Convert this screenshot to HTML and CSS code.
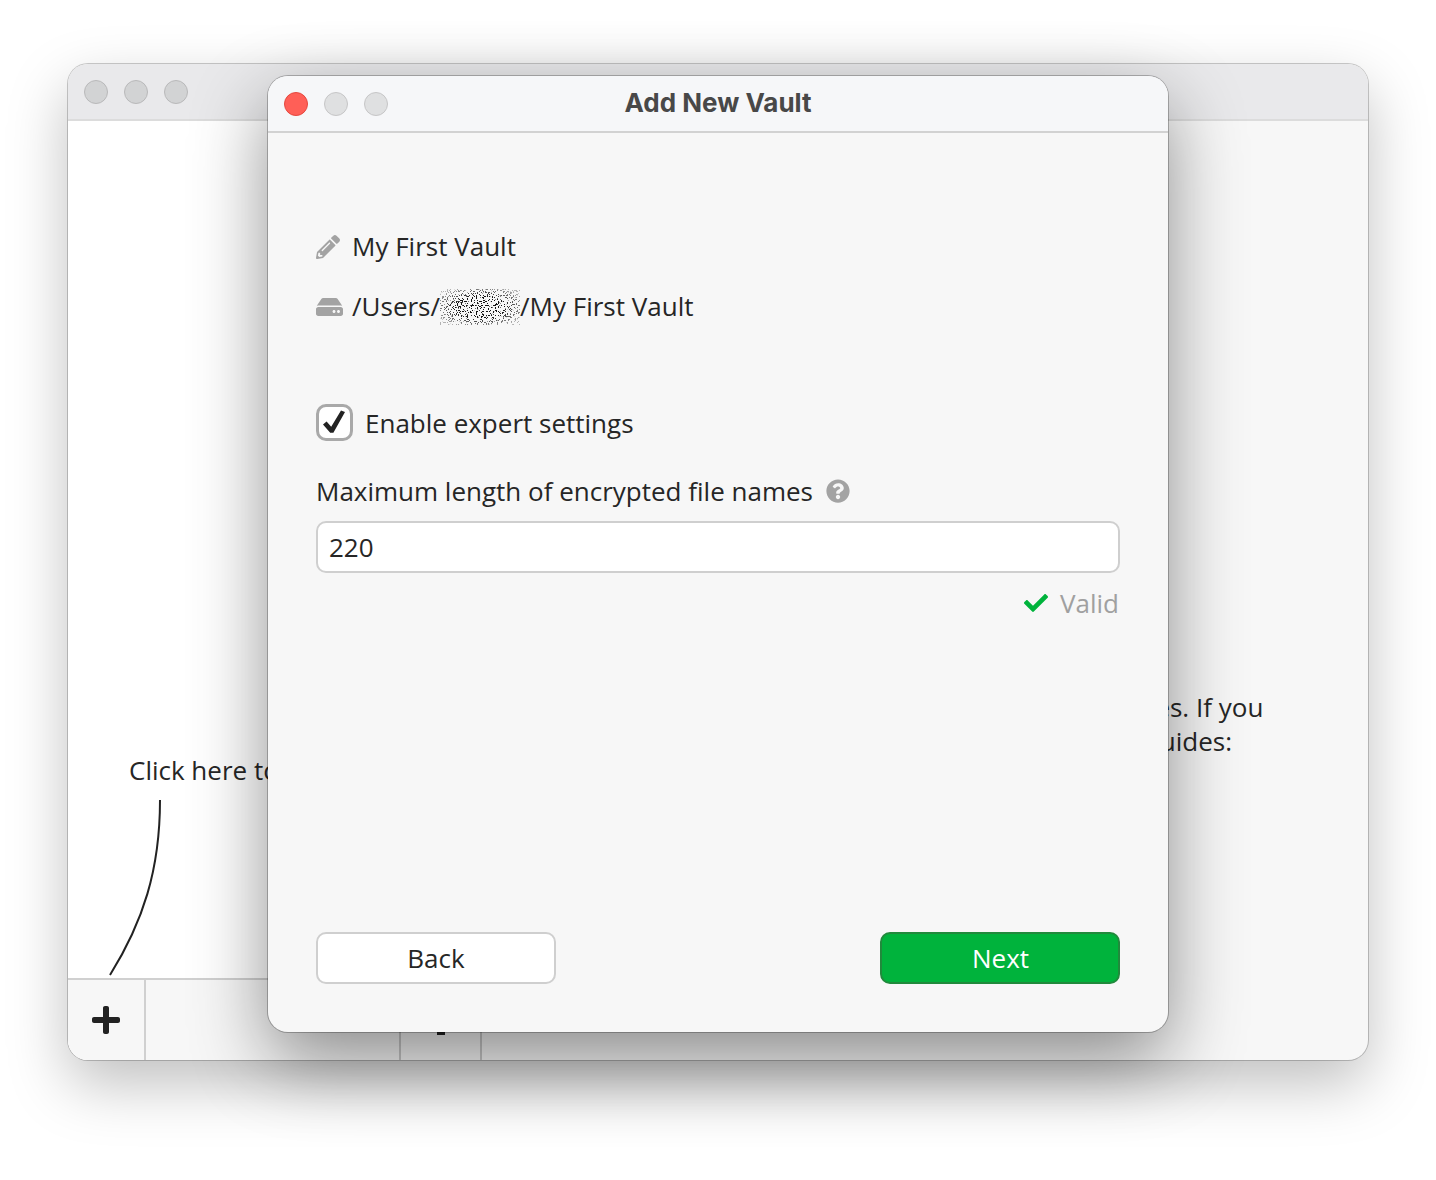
FILE: index.html
```html
<!DOCTYPE html>
<html lang="en">
<head>
<meta charset="utf-8">
<title>Add New Vault</title>
<link rel="stylesheet" href="styles.css">
</head>
<body>
<section class="window main-window">
  <header class="titlebar main-titlebar">
    <span class="light light-main"></span><span class="light light-main"></span><span class="light light-main"></span>
  </header>
  <div class="main-body">
    <aside class="sidebar">
      <div class="sidebar-hint">
        <p class="hint-text">Click here to add a vault</p>
        <svg class="hint-curve" width="60" height="178" viewBox="0 0 60 178"><path d="M51 0C51 70 34 122 1 175" fill="none" stroke="#222" stroke-width="2"/></svg>
      </div>
      <div class="sidebar-bar">
        <div class="bar-button add-button">
          <svg class="plus-icon" viewBox="0 0 448 512"><path d="M416 208H272V64c0-17.67-14.33-32-32-32h-32c-17.67 0-32 14.33-32 32v144H32c-17.67 0-32 14.33-32 32v32c0 17.67 14.33 32 32 32h144v144c0 17.67 14.33 32 32 32h32c17.67 0 32-14.33 32-32V304h144c17.67 0 32-14.33 32-32v-32c0-17.67-14.33-32-32-32z"/></svg>
        </div>
        <div class="bar-spacer"></div>
        <div class="bar-button gear-button">
          <svg class="gear-icon" viewBox="-15 -15 30 30"><circle r="9.5"/><rect x="-4" y="-15" width="8" height="30"/><rect x="-15" y="-4" width="30" height="8"/><rect x="-3" y="-13.5" width="6" height="27" transform="rotate(45)"/><rect x="-3" y="-13.5" width="6" height="27" transform="rotate(-45)"/></svg>
        </div>
      </div>
    </aside>
    <main class="welcome">
      <p class="welcome-text">Thanks for choosing Cryptomator to protect your files. If you<br>need any assistance, check out our getting started guides:</p>
    </main>
  </div>
</section>

<section class="window dialog">
  <header class="titlebar dialog-titlebar">
    <span class="light light-close"></span><span class="light light-dim"></span><span class="light light-dim"></span>
    <h1 class="dialog-title">Add New Vault</h1>
  </header>
  <div class="dialog-body">
    <div class="info-row name-row">
      <svg class="info-icon pencil" viewBox="0 0 512 512"><path d="M497.9 142.1l-46.1 46.1c-4.7 4.7-12.3 4.7-17 0l-111-111c-4.7-4.7-4.7-12.3 0-17l46.1-46.1c18.7-18.7 49.1-18.7 67.9 0l60.1 60.1c18.8 18.7 18.8 49.1 0 67.9zM284.2 99.8L21.6 362.4.4 483.9c-2.9 16.4 11.4 30.6 27.8 27.8l121.5-21.3 262.6-262.6c4.7-4.7 4.7-12.3 0-17l-111-111c-4.8-4.7-12.4-4.7-17.1 0zM124.1 339.9c-5.5-5.5-5.5-14.3 0-19.8l154-154c5.5-5.5 14.3-5.5 19.8 0s5.5 14.3 0 19.8l-154 154c-5.5 5.5-14.3 5.5-19.8 0zM88 424h48v36.3l-64.5 11.3-31.1-31.1L51.7 376H88v48z"/></svg>
      <span class="info-text">My First Vault</span>
    </div>
    <div class="info-row path-row">
      <svg class="info-icon drive" viewBox="0 0 576 512"><path d="M576 304v96c0 26.51-21.49 48-48 48H48c-26.51 0-48-21.49-48-48v-96c0-26.51 21.49-48 48-48h480c26.51 0 48 21.49 48 48zm-48-80a79.557 79.557 0 0 1 30.777 6.165L462.25 85.374A48.003 48.003 0 0 0 422.311 64H153.689a48 48 0 0 0-39.938 21.374L17.223 230.165A79.557 79.557 0 0 1 48 224h480zm-48 96c-17.673 0-32 14.327-32 32s14.327 32 32 32 32-14.327 32-32-14.327-32-32-32zm-96 0c-17.673 0-32 14.327-32 32s14.327 32 32 32 32-14.327 32-32-14.327-32-32-32z"/></svg>
      <span class="info-text">/Users/</span>
      <svg class="redaction" width="80" height="36" viewBox="0 0 80 36">
        <defs>
          <filter id="speckle" x="0" y="0" width="100%" height="100%" color-interpolation-filters="sRGB">
            <feTurbulence type="fractalNoise" baseFrequency="0.8" numOctaves="3" seed="11" result="n"/>
            <feColorMatrix in="n" type="matrix" values="0 0 0 0 0.08  0 0 0 0 0.08  0 0 0 0 0.08  0 0 0 36 -21"/>
            <feComposite in2="SourceAlpha" operator="in"/>
          </filter>
          <radialGradient id="speckle-mask" cx="50%" cy="50%" r="60%">
            <stop offset="0.5" stop-color="#000" stop-opacity="1"/>
            <stop offset="1" stop-color="#000" stop-opacity="0.3"/>
          </radialGradient>
        </defs>
        <rect x="0" y="0" width="80" height="36" fill="url(#speckle-mask)" filter="url(#speckle)"/>
      </svg>
      <span class="info-text">/My First Vault</span>
    </div>
    <label class="check-row">
      <span class="checkbox">
        <svg class="check-mark" viewBox="0 0 33 33"><path d="M5 18.5l3.6-3 4.6 5.2L23 4.5l4 1.6-11.6 20.7h-3.2z"/></svg>
      </span>
      <span>Enable expert settings</span>
    </label>
    <div class="field-label">
      <span>Maximum length of encrypted file names</span>
      <svg class="help-icon" viewBox="0 0 512 512"><path d="M504 256c0 136.997-111.043 248-248 248S8 392.997 8 256C8 119.083 119.043 8 256 8s248 111.083 248 248zM262.655 90c-54.497 0-89.255 22.957-116.549 63.758-3.536 5.286-2.353 12.415 2.715 16.258l34.699 26.31c5.205 3.947 12.621 3.008 16.665-2.122 17.864-22.658 30.113-35.797 57.303-35.797 20.429 0 45.698 13.148 45.698 32.958 0 14.976-12.363 22.667-32.534 33.976C247.128 238.528 216 254.941 216 296v4c0 6.627 5.373 12 12 12h56c6.627 0 12-5.373 12-12v-1.333c0-28.462 83.186-29.647 83.186-106.667 0-58.002-60.165-102-116.531-102zM256 338c-25.365 0-46 20.635-46 46 0 25.364 20.635 46 46 46s46-20.636 46-46c0-25.365-20.635-46-46-46z"/></svg>
    </div>
    <div class="text-input">220</div>
    <div class="valid-row">
      <svg class="valid-icon" viewBox="0 0 512 512"><path d="M173.898 439.404l-166.4-166.4c-9.997-9.997-9.997-26.206 0-36.204l36.203-36.204c9.997-9.998 26.207-9.998 36.204 0L192 312.69 432.095 72.596c9.997-9.997 26.207-9.997 36.204 0l36.203 36.204c9.997 9.997 9.997 26.206 0 36.204l-294.4 294.401c-9.998 9.997-26.207 9.997-36.204-.001z"/></svg>
      <span>Valid</span>
    </div>
    <div class="button-row">
      <div class="button button-back">Back</div>
      <div class="button button-next">Next</div>
    </div>
  </div>
</section>
</body>
</html>
```
FILE: styles.css
```css
* { box-sizing: border-box; }
html, body { margin: 0; height: 100%; }
body {
  position: relative;
  width: 1436px;
  height: 1180px;
  overflow: hidden;
  background: #fff;
  font-family: "Open Sans", "Noto Sans", sans-serif;
  font-size: 26px;
  line-height: 36px;
  color: #262626;
}
p, h1 { margin: 0; }

.window { position: absolute; display: flex; flex-direction: column; }
.main-window {
  left: 68px; top: 64px; width: 1300px; height: 996px;
  border-radius: 20px;
  background: #f7f7f7;
  box-shadow: 0 0 0 1px rgba(0,0,0,.2), 0 24px 60px rgba(0,0,0,.25);
}
.dialog {
  left: 268px; top: 76px; width: 900px; height: 956px;
  border-radius: 20px;
  background: #f7f7f7;
  box-shadow: 0 0 0 1px rgba(0,0,0,.25), 0 28px 76px rgba(0,0,0,.44);
}

.titlebar { display: flex; align-items: center; gap: 16px; height: 57px; flex: none; padding: 1px 16px 0; position: relative; border-radius: 20px 20px 0 0; }
.main-titlebar { background: #e9e9eb; border-bottom: 2px solid #dcdcdc; }
.dialog-titlebar { background: #f6f7f9; border-bottom: 2px solid #d2d2d2; }
.light { width: 24px; height: 24px; border-radius: 50%; flex: none; }
.light-main { background: #d2d3d4; border: 1px solid #b9b9ba; }
.light-dim { background: #dfe0e1; border: 1px solid #c6c6c7; }
.light-close { background: #ff5f57; border: 1px solid #e5483f; }
.dialog-title {
  position: absolute; left: 0; right: 0; top: 0; height: 54px;
  text-align: center; font-size: 26px; line-height: 54px; font-weight: 700; color: #484848;
  font-family: "Inter", "Liberation Sans", sans-serif;
}

.main-body { flex: 1; display: flex; min-height: 0; }
.sidebar { width: 414px; flex: none; background: #fff; display: flex; flex-direction: column; justify-content: flex-end; border-radius: 0 0 0 20px; }
.sidebar-hint { padding-left: 41px; }
.hint-text { margin-left: 20px; white-space: nowrap; height: 36px; margin-bottom: 12px; }
.hint-curve { display: block; }
.sidebar-bar { height: 82px; flex: none; display: flex; background: #f7f7f7; border-top: 2px solid #d0d0d0; border-radius: 0 0 0 20px; }
.bar-button { display: flex; align-items: center; justify-content: center; flex: none; }
.add-button { width: 78px; border-right: 2px solid #d0d0d0; }
.bar-spacer { flex: 1; }
.gear-button { width: 83px; border-left: 2px solid #c8c8c8; border-right: 2px solid #c8c8c8; }
.plus-icon { width: 28px; height: 32px; fill: #222; }
.gear-icon { width: 30px; height: 30px; fill: #222; }

.welcome { flex: 1; padding: 569px 0 0 51px; white-space: nowrap; min-width: 0; }
.welcome-text { line-height: 34px; }

.dialog-body { flex: 1; display: flex; flex-direction: column; padding: 96px 48px 48px; min-height: 0; }
.info-row { display: flex; align-items: center; height: 36px; }
.info-text { margin-bottom: 2px; }
.info-icon { fill: #a3a3a3; flex: none; }
.pencil { width: 24px; height: 24px; margin-right: 12px; }
.drive { width: 27px; height: 24px; margin-right: 9px; }
.path-row { margin-top: 24px; }
.redaction { flex: none; }
.check-row { display: flex; align-items: center; gap: 12px; margin-top: 79px; height: 38px; }
.checkbox { width: 37px; height: 37px; margin-bottom: 1px; border: 3px solid #a9a9a9; border-radius: 10px; background: #fff; display: flex; align-items: center; justify-content: center; flex: none; }
.check-mark { width: 33px; height: 33px; fill: #222; flex: none; }
.field-label { display: flex; align-items: center; gap: 13px; margin-top: 31px; height: 36px; }
.help-icon { width: 24px; height: 24px; fill: #a3a3a3; flex: none; }
.text-input { margin-top: 12px; height: 52px; border: 2px solid #cfcfcf; border-radius: 10px; background: #fff; padding: 0 11px; line-height: 48px; }
.valid-row { display: flex; align-items: center; justify-content: flex-end; gap: 12px; margin-top: 12px; height: 36px; padding-right: 1px; color: #a0a0a0; }
.valid-icon { width: 24px; height: 24px; fill: #00b33c; }
.button-row { margin-top: auto; display: flex; justify-content: space-between; }
.button { width: 240px; height: 52px; border-radius: 10px; display: flex; align-items: center; justify-content: center; }
.button-back { background: #fff; border: 2px solid #cfcfcf; }
.button-next { background: #00b33c; border: 2px solid #218a3c; color: #fff; padding-left: 1px; }
```
